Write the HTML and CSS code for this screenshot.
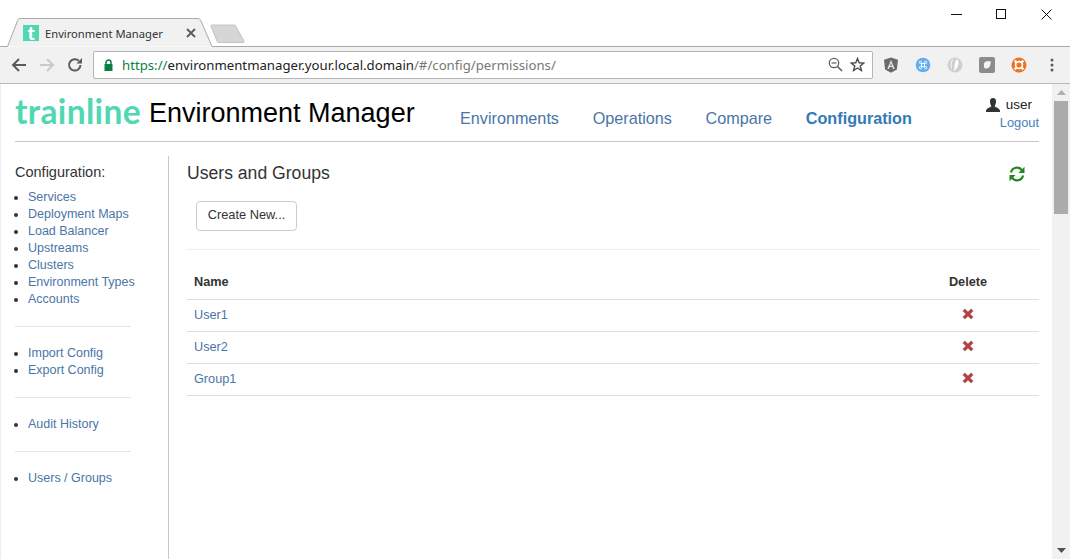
FILE: index.html
```html
<!DOCTYPE html>
<html lang="en">
<head>
<meta charset="utf-8">
<title>Environment Manager</title>
<link rel="stylesheet" href="styles.css">
</head>
<body>
<div class="chrome">
  <div class="titlebar">
    <svg class="tabshape" width="250" height="29" viewBox="0 0 250 29">
      <path d="M0 28.5H7.5L18 1.5Q18.5 .5 20 .5H198Q199.5 .5 200.5 2L212 28.5H250" fill="#f1f1f1" stroke="#a9a9a9"/>
      <path d="M211 8.5Q210.5 7 212 7H234Q235.5 7 236 8.5L244 23Q244.5 24.5 243 24.5H219Q217.500 24.500 217 23Z" fill="#d6d6d6" stroke="#c4c4c4"/>
    </svg>
    <div class="tab">
      <span class="favicon">t</span>
      <span class="tabtitle">Environment Manager</span>
      <svg class="tabclose" width="10" height="10" viewBox="0 0 10 10"><path d="M1 1L9 9M9 1L1 9" stroke="#5a5a5a" stroke-width="1.800"/></svg>
    </div>
    <div class="winctl">
      <svg width="11" height="11" viewBox="0 0 11 11"><path d="M0 5.500H11" stroke="#111"/></svg>
      <svg width="11" height="11" viewBox="0 0 11 11"><rect x=".5" y=".5" width="9" height="9" fill="none" stroke="#111"/></svg>
      <svg width="11" height="11" viewBox="0 0 11 11"><path d="M.5 .5L10.500 10.500M10.500 .5L.5 10.500" stroke="#111"/></svg>
    </div>
  </div>
  <div class="toolbar">
    <div class="navbtns">
      <svg width="16" height="16" viewBox="0 0 16 16"><path d="M15 8H2M8 2L2 8L8 14" fill="none" stroke="#5a5a5a" stroke-width="2"/></svg>
      <svg width="16" height="16" viewBox="0 0 16 16"><path d="M1 8H14M8 2L14 8L8 14" fill="none" stroke="#c9c9c9" stroke-width="2"/></svg>
      <svg width="16" height="16" viewBox="0 0 16 16"><path d="M13.500 8A5.700 5.700 0 1 1 11.800 3.800" fill="none" stroke="#5a5a5a" stroke-width="2"/><path d="M9.500 6.500H15V1Z" fill="#5a5a5a"/></svg>
    </div>
    <div class="omnibox">
      <svg class="lock" width="9" height="12" viewBox="0 0 9 12"><path d="M2 6V3.500A2.500 2.500 0 0 1 7 3.500V6" fill="none" stroke="#0b8043" stroke-width="1.500"/><rect x=".5" y="5" width="8" height="7" fill="#0b8043"/></svg>
      <span class="url"><span class="scheme">https://</span><span class="host">environmentmanager.your.local.domain</span><span class="path">/#/config/permissions/</span></span>
      <svg class="omnizoom" width="15" height="15" viewBox="0 0 15 15"><circle cx="6" cy="6" r="4.700" fill="none" stroke="#5f5f5f" stroke-width="1.300"/><path d="M9.500 9.500L14 14" stroke="#5f5f5f" stroke-width="1.600"/><path d="M3.500 6H8.500" stroke="#5f5f5f" stroke-width="1.200"/></svg>
      <svg class="star" width="15" height="15" viewBox="0 0 15 15"><path d="M7.500 1.500L9.200 5.800L13.800 6.100L10.200 9L11.400 13.500L7.500 11L3.600 13.500L4.800 9L1.200 6.100L5.800 5.800Z" fill="none" stroke="#4c4c4c" stroke-width="1.400"/></svg>
    </div>
    <div class="extensions">
      <svg width="16" height="16" viewBox="0 0 16 16"><path d="M8 .5L15 2.800L13.900 12.500L8 15.800L2.100 12.500L1 2.800Z" fill="#6b6b6b"/><path d="M8 3L4.300 12H5.900L6.600 10H9.400L10.100 12H11.700ZM7 8.700L8 6L9 8.700Z" fill="#e8e8e8"/></svg>
      <svg width="16" height="16" viewBox="0 0 16 16"><circle cx="8" cy="8" r="7.300" fill="#63aef2"/><path d="M6.500 6.500V5.400A1.100 1.100 0 1 0 5.400 6.500H10.600A1.100 1.100 0 1 0 9.500 5.400V10.600A1.100 1.100 0 1 0 10.600 9.500H5.400A1.100 1.100 0 1 0 6.500 10.600Z" fill="none" stroke="#fff" stroke-width="1"/></svg>
      <svg width="16" height="16" viewBox="0 0 16 16"><circle cx="8" cy="8" r="7.500" fill="#cfcfcf"/><path d="M10 2C13 5 11.500 11 6.500 14.500C8.500 10 6.500 6 10 2Z" fill="#ffffff"/><path d="M6.500 1.500C3 4 2.500 9.500 5 13C4.500 9 4.500 5 6.500 1.500Z" fill="#f2f2f2"/></svg>
      <svg width="16" height="16" viewBox="0 0 16 16"><rect width="16" height="16" rx="2" fill="#8c8c8c"/><path d="M5 6.500Q5.500 4.500 7.500 4.300L11.800 4.200Q12 8.500 10 10.500Q8 12 5.500 11.300Q4.500 9 5 6.500Z" fill="#f5f5f5"/></svg>
      <svg width="16" height="16" viewBox="0 0 16 16"><circle cx="8" cy="8" r="7.500" fill="#f07223"/><circle cx="8" cy="8" r="3.400" fill="none" stroke="#fff" stroke-width="1.600"/><path d="M3.700 3.700L6 6M12.300 3.700L10 6M3.700 12.300L6 10M12.300 12.300L10 10" stroke="#fff" stroke-width="2.400"/></svg>
      <svg class="kebab" width="4" height="14" viewBox="0 0 4 14"><circle cx="2" cy="2" r="1.500" fill="#5a5a5a"/><circle cx="2" cy="7" r="1.500" fill="#5a5a5a"/><circle cx="2" cy="12" r="1.500" fill="#5a5a5a"/></svg>
    </div>
  </div>
</div>
<div class="viewport">
  <div class="page">
    <header class="apphead">
      <div class="brand"><span class="logo">trainline</span><span class="apptitle">Environment Manager</span></div>
      <nav class="topnav">
        <a>Environments</a><a>Operations</a><a>Compare</a><a class="active">Configuration</a>
      </nav>
      <div class="userbox">
        <div class="username">
          <svg width="14" height="14" viewBox="0 0 14 14"><path d="M7 0C9.200 0 10.200 1.500 10 4C9.900 5.800 9 7.300 8.700 8.200C8.700 9.200 13.500 9.800 14 12.500V14H0V12.500C.5 9.800 5.300 9.200 5.300 8.200C5 7.300 4.100 5.800 4 4C3.800 1.500 4.800 0 7 0Z" fill="#333"/></svg>
          <span>user</span>
        </div>
        <a>Logout</a>
      </div>
    </header>
    <div class="body">
      <aside class="sidebar">
        <h4>Configuration:</h4>
        <ul>
          <li><a>Services</a></li>
          <li><a>Deployment Maps</a></li>
          <li><a>Load Balancer</a></li>
          <li><a>Upstreams</a></li>
          <li><a>Clusters</a></li>
          <li><a>Environment Types</a></li>
          <li><a>Accounts</a></li>
        </ul>
        <hr>
        <ul>
          <li><a>Import Config</a></li>
          <li><a>Export Config</a></li>
        </ul>
        <hr>
        <ul>
          <li><a>Audit History</a></li>
        </ul>
        <hr>
        <ul>
          <li><a>Users / Groups</a></li>
        </ul>
      </aside>
      <main class="content">
        <div class="titlerow">
          <h2>Users and Groups</h2>
          <svg class="refresh" width="16" height="16" viewBox="0 0 16 16"><path d="M2 6.500A6 6 0 0 1 13 4.500" fill="none" stroke="#1d8a1d" stroke-width="2.200"/><path d="M15.500 .8V7H9.500Z" fill="#1d8a1d"/><path d="M14 9.500A6 6 0 0 1 3 11.500" fill="none" stroke="#1d8a1d" stroke-width="2.200"/><path d="M.5 15.200V9H6.500Z" fill="#1d8a1d"/></svg>
        </div>
        <div class="actions"><button type="button">Create New...</button></div>
        <table>
          <thead><tr><th>Name</th><th class="del">Delete</th></tr></thead>
          <tbody>
            <tr><td><a>User1</a></td><td class="del"><svg width="12" height="12" viewBox="0 0 12 12"><path d="M1.800 1.800L10.200 10.200M10.200 1.800L1.800 10.200" stroke="#b0413e" stroke-width="3.200"/></svg></td></tr>
            <tr><td><a>User2</a></td><td class="del"><svg width="12" height="12" viewBox="0 0 12 12"><path d="M1.800 1.800L10.200 10.200M10.200 1.800L1.800 10.200" stroke="#b0413e" stroke-width="3.200"/></svg></td></tr>
            <tr><td><a>Group1</a></td><td class="del"><svg width="12" height="12" viewBox="0 0 12 12"><path d="M1.800 1.800L10.200 10.200M10.200 1.800L1.800 10.200" stroke="#b0413e" stroke-width="3.200"/></svg></td></tr>
          </tbody>
        </table>
      </main>
    </div>
  </div>
  <div class="scrollbar">
    <svg width="9" height="5" viewBox="0 0 9 5"><path d="M4.500 0L9 5H0Z" fill="#b0b0b0"/></svg>
    <div class="thumb"></div>
    <svg class="down" width="9" height="5" viewBox="0 0 9 5"><path d="M0 0H9L4.500 5Z" fill="#505050"/></svg>
  </div>
</div>
</body>
</html>
```

FILE: styles.css
```css
* { box-sizing: border-box; }
html, body { margin: 0; height: 100%; overflow: hidden; }
body { font-family: "Liberation Sans", Arial, sans-serif; font-size: 12.800px; color: #333; background: #fff; display: flex; flex-direction: column; }

.chrome { flex: none; }
.titlebar { height: 47px; position: relative; display: flex; align-items: flex-end; }
.tabshape { position: absolute; left: 0; bottom: 0; width: 100%; max-width: 250px; }
.titlebar::after { content: ""; position: absolute; left: 250px; right: 0; bottom: 0; height: 1px; background: #a9a9a9; }
.tab { position: relative; display: flex; align-items: center; height: 27px; margin-left: 23px; width: 173px; padding-bottom: 1px; }
.favicon { width: 16px; height: 16px; background: #4fd8b3; color: #fff; font: 900 19px/16px "Lato", sans-serif; text-align: center; }
.tabtitle { margin-left: 6px; flex: 1; font: 11.200px "Noto Sans", sans-serif; color: #333; white-space: nowrap; }
.tabclose { flex: none; }
.winctl { position: absolute; top: 9px; right: 18px; display: flex; gap: 34px; }

.toolbar { height: 37px; background: #f1f1f1; border-bottom: 1px solid #b8b8b8; display: flex; align-items: center; padding: 0 0 1px 11px; }
.navbtns { display: flex; gap: 12px; width: 82px; flex: none; }
.omnibox { flex: none; width: 780px; height: 28px; background: #fff; border: 1px solid #b5b5b5; border-radius: 2px; display: flex; align-items: center; padding: 0 7px 0 10px; }
.lock { flex: none; }
.url { margin-left: 9px; flex: 1; font: 13.200px "Noto Sans", sans-serif; white-space: nowrap; color: #777; }
.scheme { color: #0b8043; }
.host { color: #222; }
.omnizoom { margin-right: 7px; }
.extensions { display: flex; align-items: center; gap: 16px; margin-left: 10px; }
.kebab { margin-left: 7px; }

.viewport { flex: 1; display: flex; min-height: 0; }
.page { flex: 1; min-width: 0; padding: 0 13px 0 15px; border-left: 1px solid #eee; }
.apphead { height: 58px; border-bottom: 1px solid #c8c8c8; display: flex; align-items: flex-start; margin-left: -1px; }
.brand { display: flex; align-items: flex-start; padding-top: 5px; width: 445px; flex: none; }
.logo { font: 700 33.500px/40px "Lato", sans-serif; color: #4fd8b3; width: 134px; white-space: nowrap; letter-spacing: .35px; margin-top: 2px; }
.apptitle { font: 27px/40px "Liberation Sans", sans-serif; color: #000; margin-top: 4px; }
.topnav { display: flex; gap: 33.700px; padding-top: 25px; font-size: 16.200px; line-height: 18px; flex: 1; }
.topnav a { color: #4a75a8; }
.topnav a.active { color: #337ab7; font-weight: bold; }
.userbox { text-align: right; padding-top: 12px; line-height: 18px; }
.username { display: flex; align-items: center; gap: 6px; color: #222; justify-content: flex-end; margin-right: 7px; font-size: 13.500px; }
.userbox a { color: #4a7ebb; }

.body { display: flex; height: calc(100% - 72px); margin-top: 14px; margin-left: -1px; }
.sidebar { width: 154px; flex: none; border-right: 1px solid #c8c8c8; }
.sidebar h4 { margin: 8px 0 8px; font-size: 14.500px; font-weight: normal; line-height: 17px; color: #333; }
.sidebar ul { margin: 0; padding: 0 0 0 13px; list-style: disc; font-size: 12.500px; }
.sidebar li { line-height: 17px; }
.sidebar a, td a { color: #4a75a8; }
.sidebar hr { border: 0; border-top: 1px solid #e5e5e5; margin: 18px 22px 18px 0; width: 116px; }

.content { flex: 1; min-width: 0; padding: 0 0 0 18px; }
.titlerow { display: flex; justify-content: space-between; align-items: center; height: 35px; padding-top: 0; }
.titlerow h2 { margin: 0; font-size: 17.600px; font-weight: normal; color: #333; }
.refresh { margin-right: 14px; }
.actions { padding: 10px 0 18px 9px; border-bottom: 1px solid #eee; }
button { width: 101px; height: 30px; background: #fff; border: 1px solid #ccc; border-radius: 4px; font: 12.800px "Liberation Sans", sans-serif; color: #333; padding: 0 0 3px; }
table { width: 100%; border-collapse: collapse; margin-top: 15px; font-size: 12.700px; }
th { height: 34px; text-align: left; padding: 0 7px; border-bottom: 1px solid #ddd; color: #333; }
td { height: 32px; padding: 0 7px; border-bottom: 1px solid #ddd; }
.del { text-align: center; width: 142px; padding: 0; }
th.del { font-weight: bold; }
td.del svg { display: block; margin: -3px auto 0; }

.scrollbar { width: 18px; flex: none; background: #f1f1f1; display: flex; flex-direction: column; align-items: center; padding: 6px 0; }
.thumb { width: 14px; height: 113px; background: #ababab; margin-top: 6px; }
.down { margin-top: auto; }
```
